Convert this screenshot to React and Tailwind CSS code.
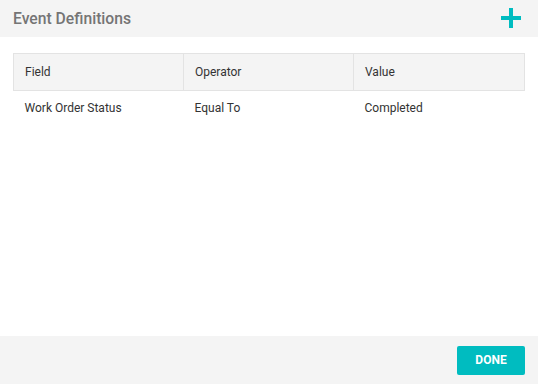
import React from "react";

export default function App() {
  const rows = [{ field: "Work Order Status", op: "Equal To", value: "Completed" }];
  return (
    <div
      className="w-[538px] h-[384px] bg-white flex flex-col"
      style={{ fontFamily: "Roboto, 'Liberation Sans', sans-serif" }}
    >
      <div className="h-[37px] bg-[#f4f4f4] flex items-center justify-between pl-[13px] pr-[17px]">
        <h1 className="text-[15.7px] font-medium text-[#757575] leading-none">Event Definitions</h1>
        <svg width="20" height="20" viewBox="0 0 20 20" className="mb-[2px]">
          <rect x="8" y="0" width="4" height="20" fill="#00bcc0" />
          <rect x="0" y="8" width="20" height="4" fill="#00bcc0" />
        </svg>
      </div>

      <div className="flex-1 px-[13px] pt-[16px]">
        <table className="w-full border-collapse text-[12px] text-[#333]">
          <thead>
            <tr className="bg-[#f4f4f4] h-[37px]">
              <th className="w-[170px] text-left font-normal pl-[11px] border border-[#e3e3e3]">Field</th>
              <th className="w-[170px] text-left font-normal pl-[11px] border border-[#e3e3e3]">Operator</th>
              <th className="text-left font-normal pl-[11px] border border-[#e3e3e3]">Value</th>
            </tr>
          </thead>
          <tbody>
            {rows.map((r, i) => (
              <tr key={i} className="h-[34px]">
                <td className="pl-[11px]">{r.field}</td>
                <td className="pl-[11px]">{r.op}</td>
                <td className="pl-[11px]">{r.value}</td>
              </tr>
            ))}
          </tbody>
        </table>
      </div>

      <div className="h-[48px] bg-[#f4f4f4] flex items-center justify-end pr-[13px]">
        <button className="w-[68px] h-[29px] bg-[#00bcc0] rounded-[2px] text-white text-[12px] font-bold">
          DONE
        </button>
      </div>
    </div>
  );
}
